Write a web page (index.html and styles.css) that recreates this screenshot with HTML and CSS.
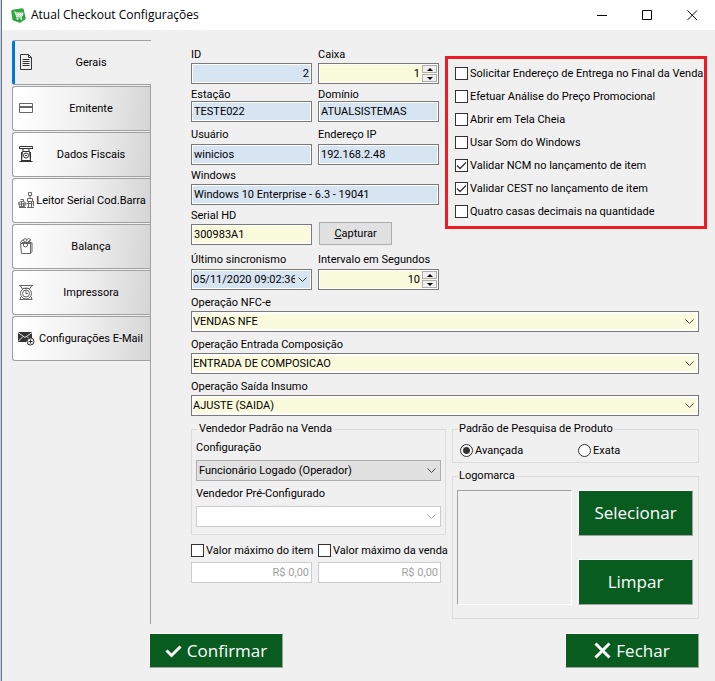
FILE: index.html
```html
<!DOCTYPE html>
<html lang="pt-BR">
<head>
<meta charset="utf-8">
<title>Atual Checkout Configurações</title>
<link rel="stylesheet" href="styles.css">
</head>
<body>
<div class="window">
  <header class="titlebar">
    <svg class="logo" viewBox="0 0 15 15" aria-hidden="true"><path d="M1.500 1.800 11 .2q1.200 0 1.600 1L14.700 10q.1 1.200-.9 1.800L9.500 14.500q-.8.400-1.700.1L2.500 12.500q-1-.4-1.200-1.500L.3 3.300q-.1-1.200 1.200-1.500z" fill="#2fa73d"/><path d="M3 4h1.400l1.200 5h5.400M5 5h7L11.200 8H5.600M5.300 6.500h6.200M7.300 5v3M9.500 5v3" fill="none" stroke="#fff"/><circle cx="6.500" cy="10.800" r="1" fill="#fff"/><circle cx="10.200" cy="10.800" r="1" fill="#fff"/></svg>
    <h1>Atual Checkout Configurações</h1>
    <div class="window-buttons">
      <button type="button" aria-label="Minimizar"><svg viewBox="0 0 11 11"><path d="M0 5.500h10"/></svg></button>
      <button type="button" aria-label="Maximizar"><svg viewBox="0 0 11 11"><path d="M.5.500h9v9h-9z"/></svg></button>
      <button type="button" aria-label="Fechar janela"><svg viewBox="0 0 11 11"><path d="M.5.500l9.500 9.500M10 .5.500 10"/></svg></button>
    </div>
  </header>

  <div class="main">
    <nav class="tabs">
      <button type="button" class="tab active"><svg viewBox="0 0 17 17"><path d="M2.500.500h8l3 3v12h-11zM10.500.500v3h3M4.500 5.500h7M4.500 7.500h7M4.500 9.500h7M4.500 11.500h7"/></svg><span>Gerais</span></button>
      <button type="button" class="tab"><svg class="soft" viewBox="0 0 17 17"><path d="M1.500 3.500h13v9h-13z"/><path d="M1 7h14" stroke-width="2"/></svg><span>Emitente</span></button>
      <button type="button" class="tab"><svg viewBox="0 0 17 17"><path d="M1.500 3V.500h13V3M2 2.500h12M5 3v2.500h6V3M4.500 5.500h7l1 9h-9zM1.500 15.500h13M3.500 6v9M12.500 6v9"/><circle cx="8" cy="9.500" r="2.500"/><path d="M7 9.500h2"/></svg><span>Dados Fiscais</span></button>
      <button type="button" class="tab"><svg class="soft" viewBox="0 0 17 17"><path d="M10.500.500h3v3h-3zM12 4v3M9.500 6.500h5v3h-5zM10.500 10v5M13.500 10v5M9 15.500h7M.5 10.500q3.500-2.500 7 0l-1 4h-5zM2.500 7.500h3v2M.5 12h8M3.500 10v5M8.500 11.500h6M5.500 11v4M15.500 9v5M1 15.500h7"/></svg><span>Leitor Serial Cod.Barra</span></button>
      <button type="button" class="tab"><svg class="soft" viewBox="0 0 17 17"><path d="M2.500 5.500h10v10h-9zM12.500 5.500l1.500-1v9l-1.500 2M2.500 5.500q0-3 2.500-3.500 1 0 1.500 2M5 2q2-2.500 4-.5l1.500-1 2 1-1 3M7 5l2-3M9 5l3-3M4 4.500h9M5.500 6v2q2 2 4 0V6"/></svg><span>Balança</span></button>
      <button type="button" class="tab"><svg class="soft" viewBox="0 0 17 17"><path d="M1 1.500h14M2.500 2l2 3M13.500 2l-2 3M4.500 4.500h7M1.500 15.500h13M2.500 15v-2M13.500 15v-2"/><circle cx="8" cy="9.500" r="5.500"/><circle cx="8" cy="9.500" r="3.500"/><path d="M8 6v3.500h2"/></svg><span>Impressora</span></button>
      <button type="button" class="tab"><svg viewBox="0 0 17 17"><path d="M0 2h14v7h-4l-2 3H0z" fill="#333" stroke="none"/><path d="M0 2.500l7 5 7-5M0 11.500l5-5M9 6.500l2 2" stroke="#e8e8e8"/><circle cx="12.500" cy="11.500" r="3.500" fill="#eee"/><path d="M10.500 11.500h4M12.500 9.500v4"/></svg><span>Configurações E-Mail</span></button>
    </nav>

    <form class="content" id="config">
      <div class="upper">
        <div class="details">
          <div class="field"><label for="id">ID</label><input class="num" id="id" type="text" value="2" readonly></div>
          <div class="field"><label for="caixa">Caixa</label>
            <div class="spin"><input id="caixa" type="text" inputmode="numeric" value="1"><div class="steps"><button type="button" aria-label="Aumentar caixa"></button><button type="button" aria-label="Diminuir caixa"></button></div></div></div>
          <div class="field near"><label for="estacao">Estação</label><input id="estacao" type="text" value="TESTE022" readonly></div>
          <div class="field near"><label for="dominio">Domínio</label><input id="dominio" type="text" value="ATUALSISTEMAS" readonly></div>
          <div class="field far"><label for="usuario">Usuário</label><input id="usuario" type="text" value="winicios" readonly></div>
          <div class="field far"><label for="ip">Endereço IP</label><input id="ip" type="text" value="192.168.2.48" readonly></div>
          <div class="field wide"><label for="windows">Windows</label><input id="windows" type="text" value="Windows 10 Enterprise - 6.3 - 19041" readonly></div>
          <div class="field"><label for="serial">Serial HD</label><input id="serial" type="text" value="300983A1"></div>
          <button type="button" class="capture"><u>C</u>apturar</button>
          <div class="field last"><label for="sinc">Último sincronismo</label><select id="sinc" class="date"><option>05/11/2020 09:02:36</option></select></div>
          <div class="field last"><label for="intervalo">Intervalo em Segundos</label>
            <div class="spin"><input id="intervalo" type="text" inputmode="numeric" value="10"><div class="steps"><button type="button" aria-label="Aumentar intervalo"></button><button type="button" aria-label="Diminuir intervalo"></button></div></div></div>
        </div>
        <div class="options">
          <label><input type="checkbox">Solicitar Endereço de Entrega no Final da Venda</label>
          <label><input type="checkbox">Efetuar Análise do Preço Promocional</label>
          <label><input type="checkbox">Abrir em Tela Cheia</label>
          <label><input type="checkbox">Usar Som do Windows</label>
          <label><input type="checkbox" checked>Validar NCM no lançamento de item</label>
          <label><input type="checkbox" checked>Validar CEST no lançamento de item</label>
          <label><input type="checkbox">Quatro casas decimais na quantidade</label>
        </div>
      </div>

      <div class="operations">
        <div class="field"><label for="nfce">Operação NFC-e</label><select id="nfce"><option>VENDAS NFE</option></select></div>
        <div class="field"><label for="entrada">Operação Entrada Composição</label><select id="entrada"><option>ENTRADA DE COMPOSICAO</option></select></div>
        <div class="field"><label for="saida">Operação Saída Insumo</label><select id="saida"><option>AJUSTE (SAIDA)</option></select></div>
      </div>

      <div class="lower">
        <div class="column">
          <fieldset class="seller">
            <legend>Vendedor Padrão na Venda</legend>
            <div class="field"><label for="modo">Configuração</label><select id="modo" class="gray"><option>Funcionário Logado (Operador)</option></select></div>
            <div class="field"><label for="vendedor">Vendedor Pré-Configurado</label><select id="vendedor" disabled><option></option></select></div>
          </fieldset>
          <div class="limits">
            <div class="limit"><label><input type="checkbox">Valor máximo do item</label><input type="text" aria-label="Valor máximo do item" value="R$ 0,00" disabled></div>
            <div class="limit"><label><input type="checkbox">Valor máximo da venda</label><input type="text" aria-label="Valor máximo da venda" value="R$ 0,00" disabled></div>
          </div>
        </div>
        <div class="column">
          <fieldset class="search">
            <legend>Padrão de Pesquisa de Produto</legend>
            <label><input type="radio" name="pesquisa" checked>Avançada</label>
            <label><input type="radio" name="pesquisa">Exata</label>
          </fieldset>
          <fieldset class="brand">
            <legend>Logomarca</legend>
            <div class="preview"></div>
            <div class="brand-buttons">
              <button type="button" class="green">Selecionar</button>
              <button type="button" class="green">Limpar</button>
            </div>
          </fieldset>
        </div>
      </div>
    </form>
  </div>

  <footer class="actions">
    <button type="submit" form="config" class="green"><svg viewBox="0 0 17 17"><path d="M1.500 8.500l5 5 9-9"/></svg>Confirmar</button>
    <button type="button" class="green"><svg viewBox="0 0 17 17"><path d="M1.500 1.500l14 14M15.500 1.500l-14 14"/></svg>Fechar</button>
  </footer>
</div>
</body>
</html>
```
FILE: styles.css
```css
* { box-sizing: border-box; }

body {
  margin: 0;
  background: #f0f0f0;
  color: #000;
  font: 11px/12px Roboto, sans-serif;
}

button, input, select { font: inherit; color: inherit; margin: 0; border-radius: 0; }
label, legend, button { white-space: nowrap; }

.window {
  min-height: 100vh;
  border-left: 1px solid #c3d0e6;
  box-shadow: inset 1px 0 0 #6b7280;
}

/* Title bar */
.titlebar {
  display: flex;
  align-items: center;
  height: 30px;
  margin-left: 1px;
  padding-left: 9px;
  background: #fff;
}
.logo { width: 15px; height: 15px; }
.titlebar h1 {
  flex: 1;
  margin: 0 0 0 5px;
  font: 12px/16px "Open Sans", sans-serif;
}
.window-buttons { display: flex; }
.window-buttons button {
  display: flex;
  justify-content: center;
  align-items: center;
  width: 45px;
  height: 28px;
  padding: 0;
  border: 0;
  background: none;
}
.window-buttons svg { width: 11px; height: 11px; fill: none; stroke: #000; }

/* Tabs */
.main { display: flex; padding: 10px 16px 0 11px; }
.tabs {
  display: flex;
  flex-direction: column;
  gap: 1px;
  width: 139px;
  flex: none;
  border-right: 1px solid #a0a0a0;
}
.tab {
  display: flex;
  align-items: center;
  height: 45px;
  padding: 0 3px 0 5px;
  border: 1px solid #a0a0a0;
  border-right: 0;
  border-radius: 3px 0 0 3px;
  background: linear-gradient(95deg, #fff 5%, #f0f0f0 50%, #d6d6d6);
}
.tab.active {
  margin-right: -1px;
  padding: 0 4px 0 3px;
  border-left: 3px solid #0078d7;
  background: #f0f0f0;
}
.tab svg { width: 17px; height: 17px; flex: none; fill: none; stroke: #333; }
.tab svg.soft { stroke: #666; }
.tab span { flex: 1; padding-top: 1px; text-align: center; }

/* Fields */
.content { flex: 1; min-width: 0; padding: 9px 0 5px 40px; }
.field { display: flex; flex-direction: column; gap: 2px; min-width: 0; }
.field.near { gap: 0; }
.field.far { gap: 3px; margin-top: 2px; }
.field.last { gap: 3px; margin-top: 4px; }

input[type="text"], select {
  width: 100%;
  height: 21px;
  padding: 0 2px;
  border: 1px solid #7a7a7a;
  background-color: #fafadc;
  box-shadow: inset 0 0 0 1px #fff;
}
input[readonly], select.date { background-color: #d7e4f2; }
input.num { text-align: right; }

select {
  appearance: none;
  padding: 0 20px 0 1px;
  background-repeat: no-repeat;
  background-position: right 4px center;
  background-image: url("data:image/svg+xml,%3Csvg xmlns='http://www.w3.org/2000/svg' width='9' height='6'%3E%3Cpath d='M.5.5l4 4 4-4' fill='none' stroke='%23444'/%3E%3C/svg%3E");
  box-shadow: inset 0 0 0 2px #fff;
}
select.date { padding-right: 16px; box-shadow: inset 0 0 0 1px #fff; }
select.gray { padding-left: 2px; border-color: #adadad; background-color: #e1e1e1; box-shadow: none; }
select:disabled {
  border-color: #ccc;
  background-color: #fff;
  background-image: url("data:image/svg+xml,%3Csvg xmlns='http://www.w3.org/2000/svg' width='9' height='6'%3E%3Cpath d='M.5.5l4 4 4-4' fill='none' stroke='%23aaa'/%3E%3C/svg%3E");
  opacity: 1;
}

.spin {
  display: flex;
  height: 21px;
  border: 1px solid #7a7a7a;
  background: #fafadc;
  box-shadow: inset 0 0 0 1px #fff;
}
.spin input[type="text"] {
  flex: 1;
  min-width: 0;
  height: 19px;
  border: 0;
  background: none;
  box-shadow: none;
  text-align: right;
}
.steps { display: flex; flex-direction: column; gap: 1px; padding: 1px 1px 1px 0; }
.steps button {
  display: flex;
  justify-content: center;
  align-items: center;
  width: 15px;
  height: 8px;
  padding: 0;
  border: 1px solid #adadad;
  background: #f0f0f0;
}
.steps button::after {
  content: "";
  border: 3px solid transparent;
  border-top: 0;
  border-bottom: 3px solid #000;
}
.steps button:last-child::after { border-bottom: 0; border-top: 3px solid #000; }

/* Upper area */
.upper { display: flex; gap: 6px; }
.details {
  display: grid;
  grid-template-columns: 121px 121px;
  column-gap: 6px;
  row-gap: 5px;
  flex: none;
}
.wide { grid-column: span 2; }
.capture {
  align-self: end;
  justify-self: start;
  width: 73px;
  height: 23px;
  margin-left: 1px;
  padding: 1px 0 0;
  border: 1px solid #adadad;
  background: #e1e1e1;
}
.options {
  display: flex;
  flex-direction: column;
  gap: 10px;
  flex: 1;
  min-width: 0;
  align-self: flex-start;
  margin: 7px -8px 0 0;
  padding: 8px 0 8px 7px;
  border: 3px solid #ed1c24;
}
.options label, .limit label, .search label { display: flex; align-items: center; gap: 2px; height: 13px; line-height: 13px; }

input[type="checkbox"], input[type="radio"] {
  appearance: none;
  flex: none;
  width: 13px;
  height: 13px;
  border: 1px solid #333;
  background: #fff;
}
input[type="checkbox"]:checked {
  background-image: url("data:image/svg+xml,%3Csvg xmlns='http://www.w3.org/2000/svg' width='11' height='11'%3E%3Cpath d='M1 5.500l3 3 6-6' fill='none' stroke='%23333' stroke-width='1.300'/%3E%3C/svg%3E");
}
input[type="radio"] { border-radius: 50%; }
input[type="radio"]:checked { background: radial-gradient(circle, #333 3px, #fff 4px); }

.operations { display: flex; flex-direction: column; gap: 7px; margin-top: 7px; }

/* Lower area */
.lower { display: flex; gap: 6px; margin-top: 7px; }
.column { flex: 1; min-width: 0; }
.column:first-child { flex: none; width: 255px; }
fieldset { min-width: 0; margin: 0; border: 1px solid #dcdcdc; }
legend { padding: 0 1px; }

.seller { display: flex; flex-direction: column; gap: 7px; padding: 7px 4px; }
.seller legend { margin-left: 2px; }
.seller .field { gap: 6px; }

.limits { display: grid; grid-template-columns: 121px 123px; gap: 6px; margin-top: 9px; }
.limit { display: flex; flex-direction: column; gap: 5px; min-width: 0; }
.limit input[type="text"] { border-color: #ccc; background: #fff; color: #a0a0a0; text-align: right; }

.search { display: grid; grid-template-columns: 118px 1fr; padding: 9px 7px 5px; }
.search legend { margin-left: -2px; }

.brand { display: grid; grid-template-columns: 1fr 1fr; gap: 6px; margin-top: 7px; padding: 8px 5px 13px 4px; }
.brand legend { margin-left: 1px; }
.preview {
  height: 115px;
  border: 1px solid;
  border-color: #a0a0a0 #fff #fff #a0a0a0;
}
.brand-buttons { display: flex; flex-direction: column; justify-content: space-between; }

.green {
  display: flex;
  justify-content: center;
  align-items: center;
  gap: 5px;
  height: 46px;
  padding: 0;
  border: 1px solid;
  border-color: #fff #a0a0a0 #a0a0a0 #fff;
  background: #085c20;
  color: #fff;
  font: 17px/24px "Open Sans", sans-serif;
}

.actions { display: flex; justify-content: space-between; margin-top: 9px; padding: 0 16px 0 148px; }
.actions .green { width: 134px; height: 35px; }
.actions svg { width: 17px; height: 17px; fill: none; stroke: #fff; stroke-width: 3; }
```
